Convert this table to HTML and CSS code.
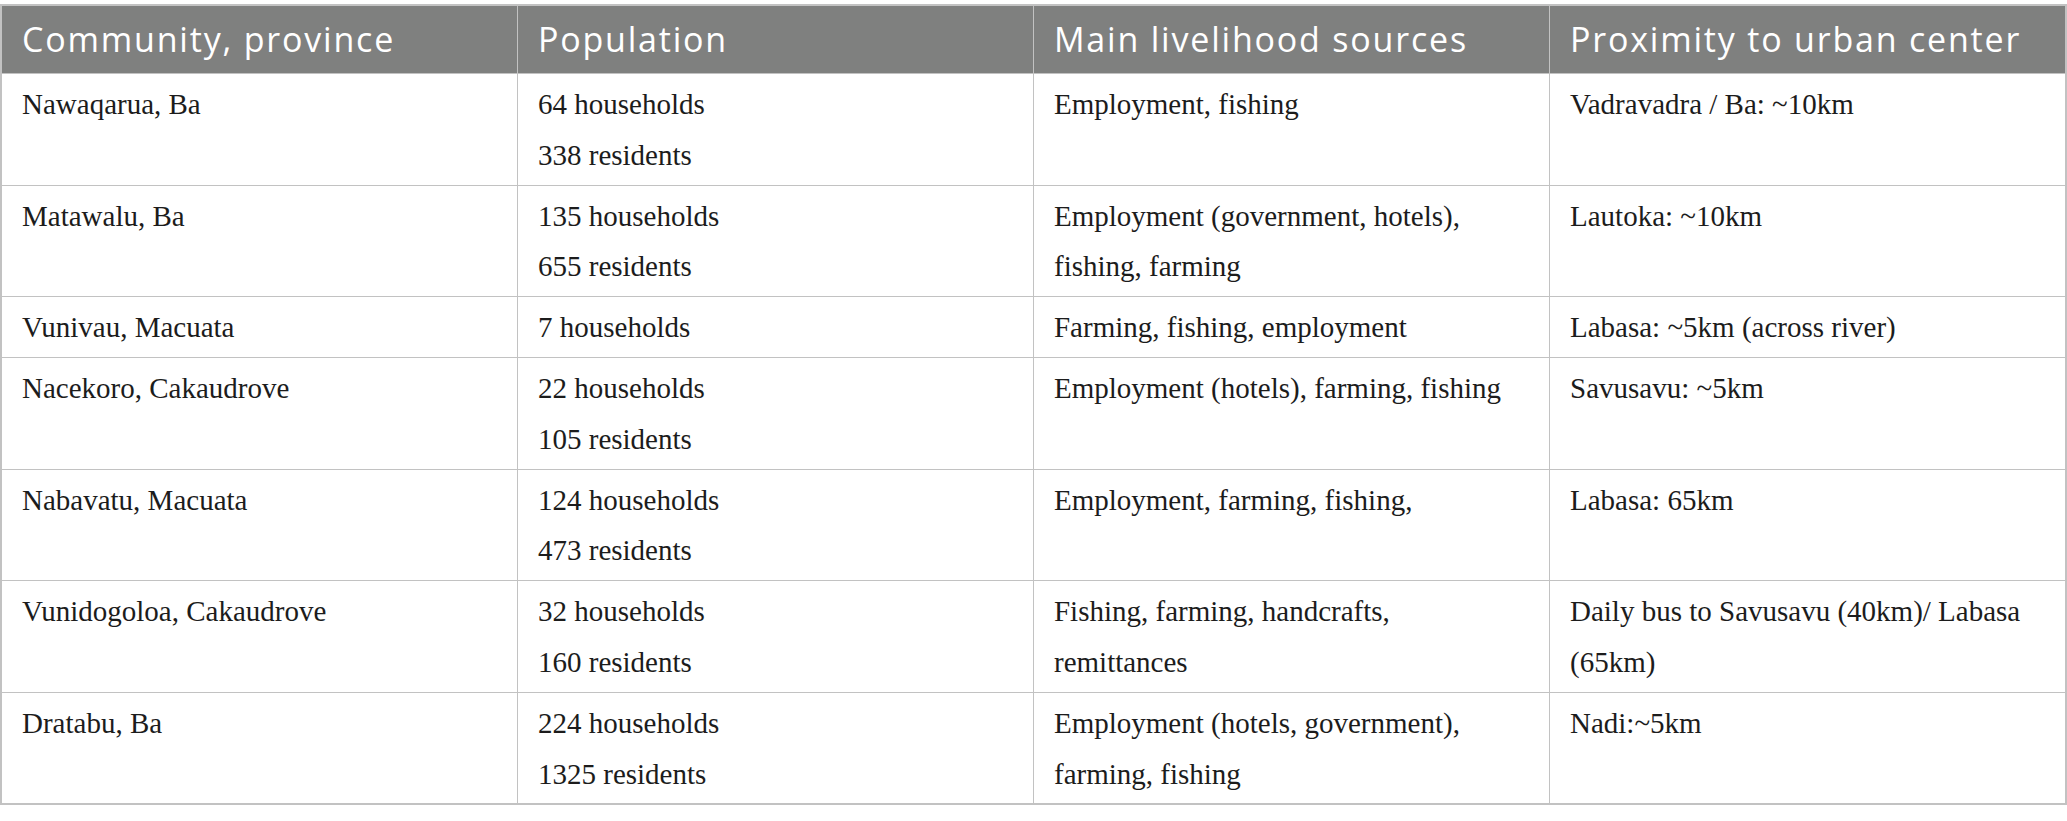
FILE: index.html
```html
<!DOCTYPE html>
<html lang="en">
<head>
    <meta charset="UTF-8">
    <meta name="viewport" content="width=device-width, initial-scale=1.0">
    <title>Study communities</title>
    <link rel="stylesheet" href="styles.css">
</head>
<body>
    <!-- Communities table -->
    <table class="data-table">
        <thead>
            <tr>
                <th>Community, province</th>
                <th>Population</th>
                <th>Main livelihood sources</th>
                <th>Proximity to urban center</th>
            </tr>
        </thead>
        <tbody>
            <tr>
                <td>Nawaqarua, Ba</td>
                <td>64 households<br>338 residents</td>
                <td>Employment, fishing</td>
                <td>Vadravadra / Ba: ~10km</td>
            </tr>
            <tr>
                <td>Matawalu, Ba</td>
                <td>135 households<br>655 residents</td>
                <td>Employment (government, hotels), fishing, farming</td>
                <td>Lautoka: ~10km</td>
            </tr>
            <tr>
                <td>Vunivau, Macuata</td>
                <td>7 households</td>
                <td>Farming, fishing, employment</td>
                <td>Labasa: ~5km (across river)</td>
            </tr>
            <tr>
                <td>Nacekoro, Cakaudrove</td>
                <td>22 households<br>105 residents</td>
                <td>Employment (hotels), farming, fishing</td>
                <td>Savusavu: ~5km</td>
            </tr>
            <tr>
                <td>Nabavatu, Macuata</td>
                <td>124 households<br>473 residents</td>
                <td>Employment, farming, fishing,</td>
                <td>Labasa: 65km</td>
            </tr>
            <tr>
                <td>Vunidogoloa, Cakaudrove</td>
                <td>32 households<br>160 residents</td>
                <td>Fishing, farming, handcrafts, remittances</td>
                <td>Daily bus to Savusavu (40km)/ Labasa (65km)</td>
            </tr>
            <tr>
                <td>Dratabu, Ba</td>
                <td>224 households<br>1325 residents</td>
                <td>Employment (hotels, government), farming, fishing</td>
                <td>Nadi:~5km</td>
            </tr>
        </tbody>
    </table>
</body>
</html>
```

FILE: styles.css
```css
/* General styling */
body {
    margin: 0;
    padding-top: 4px;
    background-color: #ffffff;
    font-family: 'Liberation Serif', 'Times New Roman', serif;
    color: #1c1c1c;
}

/* Table layout */
.data-table {
    width: 100%;
    border-collapse: collapse;
    table-layout: fixed;
    border: 2px solid #c2c2c2;
}

.data-table th,
.data-table td {
    width: 25%;
    border: 1px solid #c2c2c2;
    text-align: left;
    vertical-align: top;
}

/* Header row */
.data-table th {
    background-color: #7f807f;
    color: #ffffff;
    font-family: 'Open Sans', 'Noto Sans', sans-serif;
    font-weight: normal;
    font-size: 34px;
    letter-spacing: 1.8px;
    line-height: 43px;
    padding: 12px 20px;
    vertical-align: middle;
    white-space: nowrap;
}

/* Body cells */
.data-table td {
    font-size: 29px;
    line-height: 50.8px;
    padding: 5px 20px 4px 20px;
}
```
